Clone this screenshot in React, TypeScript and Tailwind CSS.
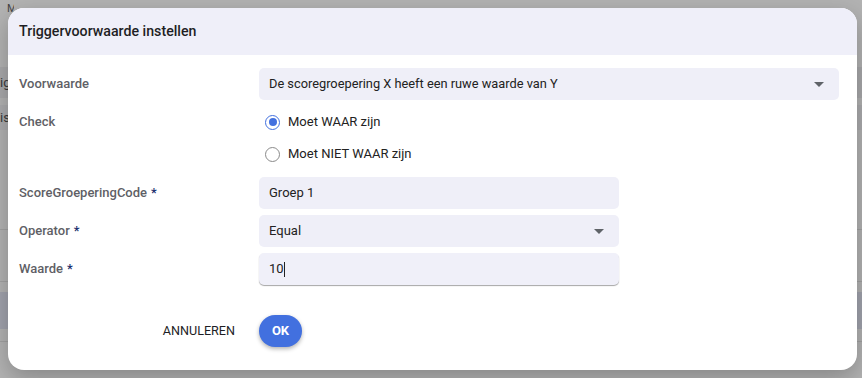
import { useState } from "react";

const font = {
  fontFamily: "Roboto, 'Noto Sans', sans-serif",
};

function Caret() {
  return (
    <svg
      width="10"
      height="5"
      viewBox="0 0 10 5"
      className="shrink-0"
    >
      <path d="M0 0 L10 0 L5 5 Z" fill="#5f6368" />
    </svg>
  );
}

function Radio({
  checked,
  label,
  onClick,
}: {
  checked: boolean;
  label: string;
  onClick: () => void;
}) {
  return (
    <button
      onClick={onClick}
      className="h-8 flex items-center gap-[8px] text-[13px] text-[#222]"
    >
      <span
        className={
          checked
            ? "w-[15px] h-[15px] rounded-full border-[1.5px] border-[#4270df] flex items-center justify-center"
            : "w-[15px] h-[15px] rounded-full border-[1.5px] border-[#8a8a8a] flex items-center justify-center"
        }
      >
        {checked && (
          <span className="w-[8px] h-[8px] rounded-full bg-[#4270df]" />
        )}
      </span>
      {label}
    </button>
  );
}

function Label({
  text,
  required,
}: {
  text: string;
  required?: boolean;
}) {
  return (
    <div className="text-[13px] font-medium text-[#5f5f66]">
      {text}
      {required && (
        <span className="text-[#1d2f6e] ml-[4px]">*</span>
      )}
    </div>
  );
}

export default function App() {
  const [check, setCheck] =
    useState(true);

  return (
    <div
      className="relative w-[862px] h-[378px] overflow-hidden bg-[#b3b3b3]"
      style={font}
    >
      {/* page behind the overlay */}
      <div className="flex flex-col text-[13px] text-[#333]">
        <div className="h-[67px]">
          <div className="w-[14px] overflow-hidden pl-[7px] pt-[3px] text-[11px] text-[#444] leading-none">
            M
          </div>
        </div>
        <div className="h-[31px] bg-[#a9a9ab] flex items-center">
          <div className="w-[8px] overflow-hidden whitespace-nowrap text-[#3a3a3a]">
            ig
          </div>
        </div>
        <div className="h-[7px]" />
        <div className="h-[25px] bg-[#acacae] flex items-center">
          <div className="w-[8px] overflow-hidden whitespace-nowrap text-[#3a3a3a]">
            is
          </div>
        </div>
        <div className="h-[99px]" />
        <div className="h-px bg-[#a2a2a2]" />
        <div className="h-[51px]" />
        <div className="h-px bg-[#a2a2a2]" />
        <div className="h-[10px]" />
        <div className="h-[37px] bg-[#a1a3ad]" />
        <div className="h-[12px]" />
        <div className="h-px bg-[#a2a2a2]" />
      </div>

      {/* dialog */}
      <div className="absolute left-[8px] top-[8px] w-[849px] h-[362px] bg-white rounded-[16px] overflow-hidden shadow-[0_8px_24px_rgba(0,0,0,0.25)] flex flex-col">
        <div className="h-[47px] shrink-0 bg-[#efeff9] flex items-center px-[11px]">
          <h2 className="text-[14.2px] font-medium text-[#1e1e24]">
            Triggervoorwaarde instellen
          </h2>
        </div>

        <div className="pl-[11px] pr-[18px] pt-[13px] grid grid-cols-[240px_1fr] gap-y-[6px] items-center">
          <Label text="Voorwaarde" />
          <div className="h-8 rounded-[5px] bg-[#efeff8] flex items-center justify-between pl-[10px] pr-[15px] text-[12.8px] text-[#222]">
            De scoregroepering X heeft een ruwe waarde van Y
            <Caret />
          </div>

          <div className="self-start h-8 flex items-center">
            <Label text="Check" />
          </div>
          <div className="flex flex-col pl-[6px]">
            <Radio
              checked={check}
              label="Moet WAAR zijn"
              onClick={() =>
                setCheck(true)
              }
            />
            <Radio
              checked={!check}
              label="Moet NIET WAAR zijn"
              onClick={() =>
                setCheck(false)
              }
            />
          </div>

          <Label
            text="ScoreGroeperingCode"
            required
          />
          <div className="mt-[1px] w-[360px] h-8 rounded-[5px] bg-[#efeff8] flex items-center px-[10px] text-[13px] text-[#222]">
            Groep 1
          </div>

          <Label
            text="Operator"
            required
          />
          <div className="w-[360px] h-8 rounded-[5px] bg-[#efeff8] flex items-center justify-between pl-[10px] pr-[15px] text-[13px] text-[#222]">
            Equal
            <Caret />
          </div>

          <Label
            text="Waarde"
            required
          />
          <div className="w-[360px] h-8 rounded-[5px] bg-[#f0f0f9] shadow-[0_1px_1px_rgba(0,0,0,0.35)] flex items-center px-[10px] text-[13px] text-[#222]">
            10
            <span className="w-px h-[15px] bg-[#222]" />
          </div>
        </div>

        <div className="pl-[11px] pt-[30px] grid grid-cols-[240px_1fr] items-center">
          <div className="flex justify-end pr-[14px]">
            <button className="h-8 px-[10px] text-[12.6px] text-[#1e1e24]">
              ANNULEREN
            </button>
          </div>
          <div>
            <button className="h-8 w-[43px] rounded-full bg-[#4270df] text-white text-[13px] font-bold shadow-[0_2px_4px_rgba(0,0,0,0.3)]">
              OK
            </button>
          </div>
        </div>
      </div>
    </div>
  );
}
